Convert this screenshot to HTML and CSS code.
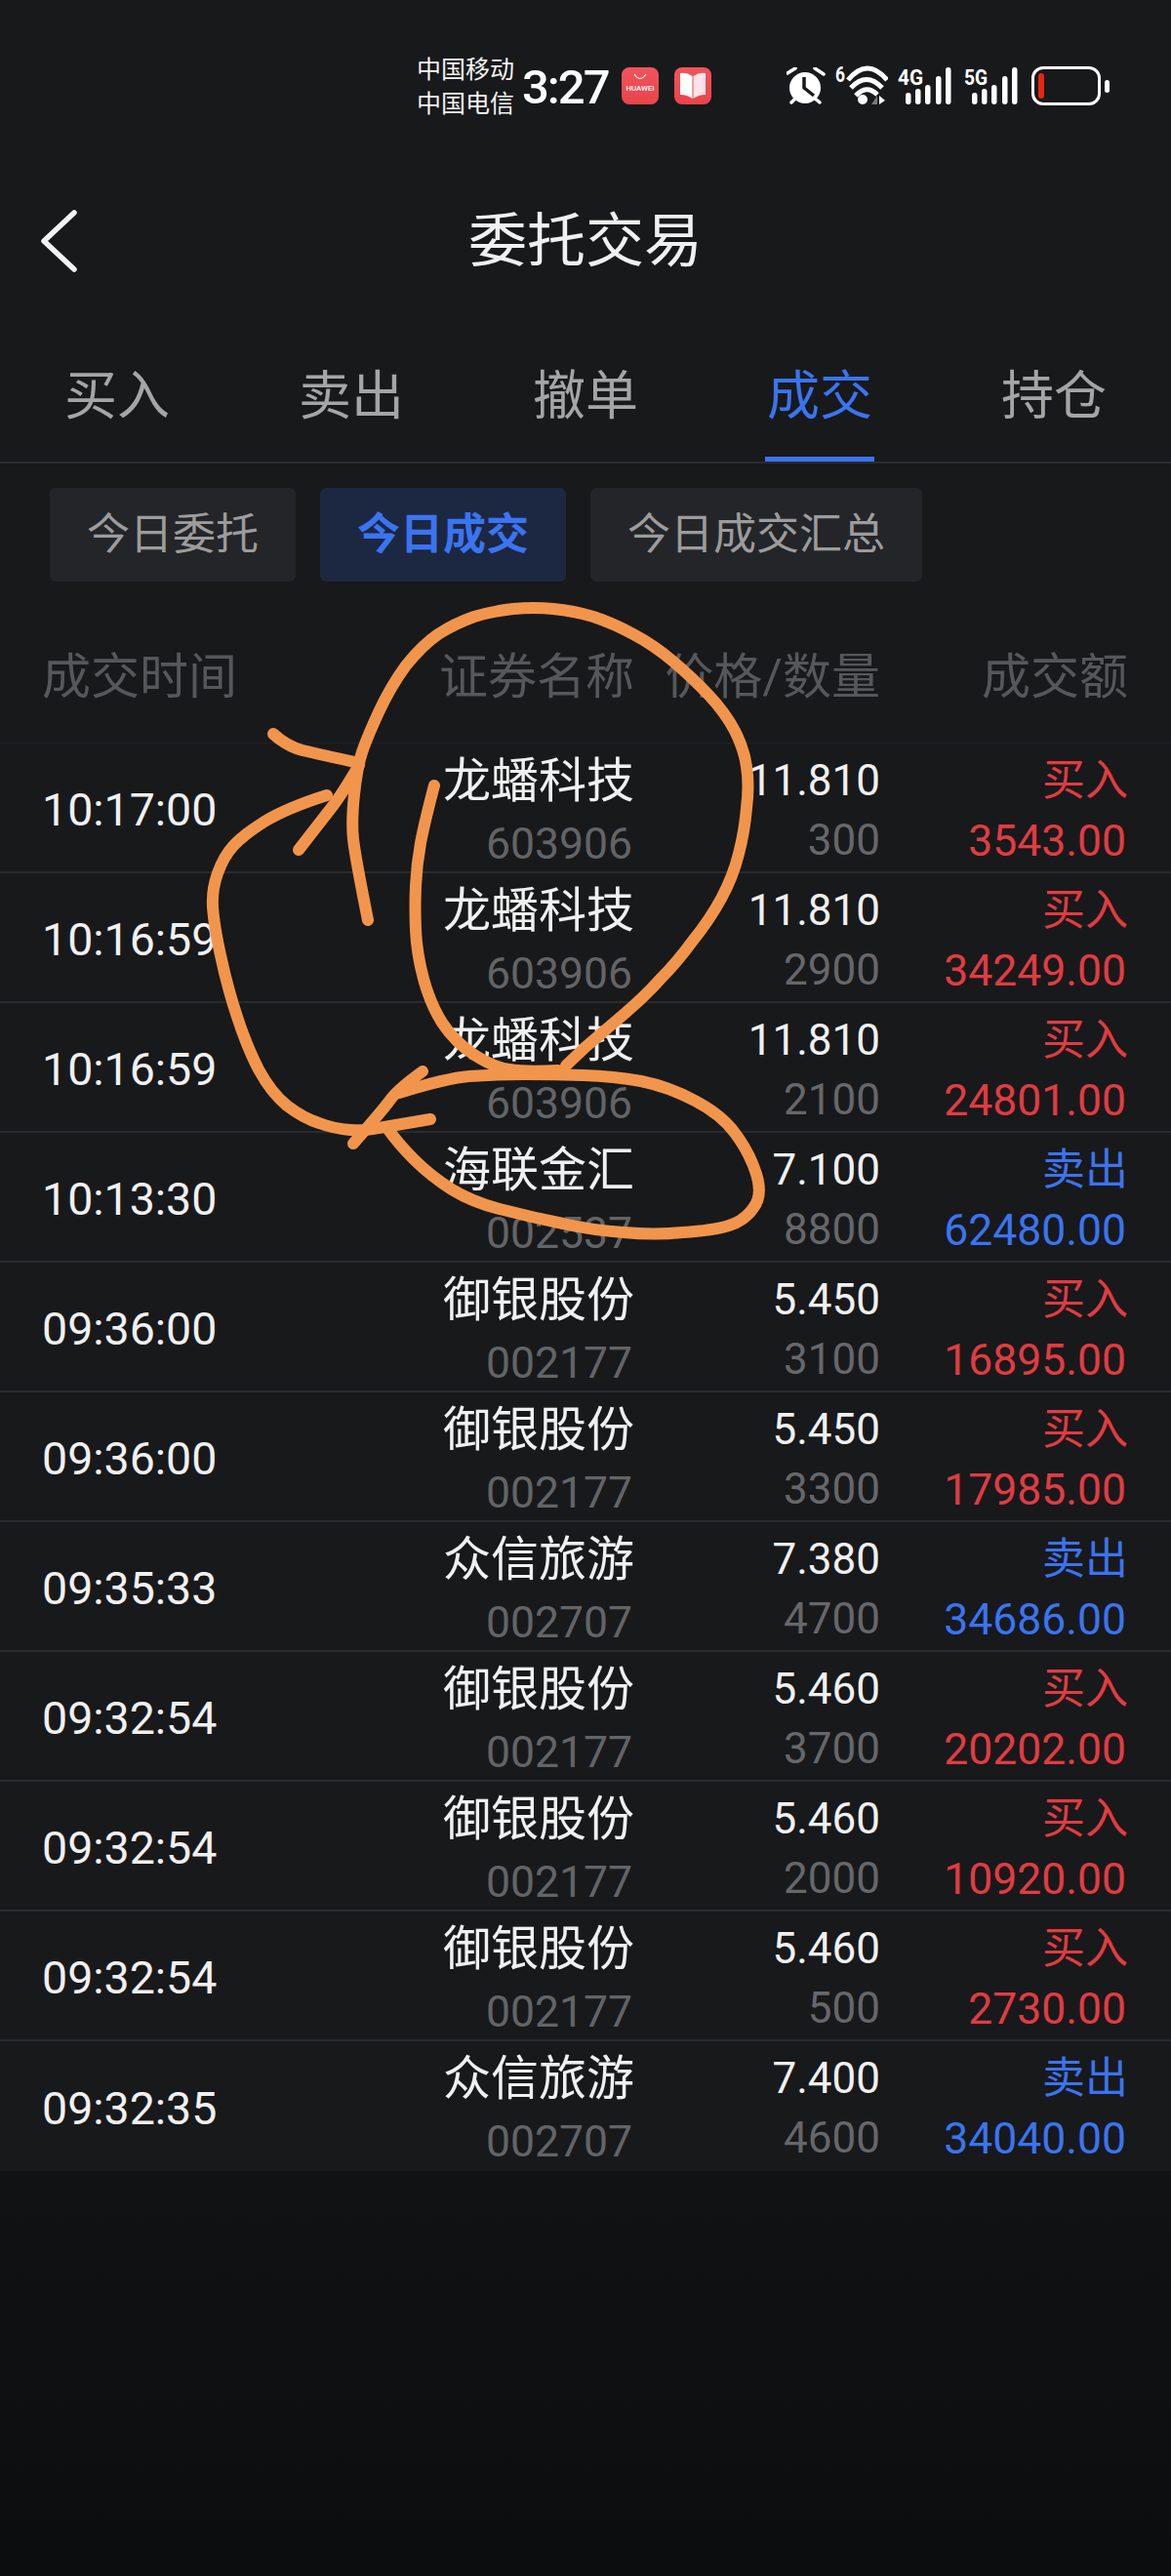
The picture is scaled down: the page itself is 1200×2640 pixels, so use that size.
FILE: index.html
```html
<!DOCTYPE html>
<html lang="zh-CN">
<head>
    <meta charset="UTF-8">
    <title>委托交易</title>
    <link rel="stylesheet" href="styles.css">
</head>
<body>
    <div class="screen">
        <div class="status-bar">
            <div class="carriers">
                <span>中国移动</span>
                <span>中国电信</span>
            </div>
            <div class="clock">3:27</div>
            <div class="app-icon">
                <svg viewBox="0 0 38 38" width="38" height="38">
                    <defs>
                        <linearGradient id="appRed" x1="0" y1="0" x2="0" y2="1">
                            <stop offset="0" stop-color="#f1545c"/>
                            <stop offset="1" stop-color="#e8444c"/>
                        </linearGradient>
                    </defs>
                    <rect width="38" height="38" rx="8" fill="url(#appRed)"/>
                    <path d="M13 7q6 9 12 0" fill="none" stroke="#fff" stroke-width="1.200"/>
                    <text x="19" y="23.500" class="huawei-text" text-anchor="middle" textLength="29" lengthAdjust="spacingAndGlyphs">HUAWEI</text>
                </svg>
            </div>
            <div class="app-icon book-icon">
                <svg viewBox="0 0 38 38" width="38" height="38">
                    <rect width="38" height="38" rx="8" fill="url(#appRed)"/>
                    <path d="M18.500 9Q13 5 6 6V28Q13 28 18.500 32Z" fill="#fff"/>
                    <path d="M19.500 9Q25 5 32 6V28Q25 28 19.500 32Z" fill="#fde3e8"/>
                </svg>
            </div>
            <div class="alarm-icon">
                <svg viewBox="0 0 40 38" width="40" height="38">
                    <circle cx="19" cy="21" r="16" fill="#fff"/>
                    <path d="M1 6L9 1M29 1L38 7M5 36L10 31M28 31L34 36" fill="none" stroke="#fff" stroke-width="3.500" stroke-linecap="round"/>
                    <path d="M18 10V21L28 29" fill="none" stroke="#18191b" stroke-width="3.500"/>
                </svg>
            </div>
            <div class="wifi-icon">
                <svg viewBox="0 0 54 42" width="54" height="42">
                    <text x="0" y="17" class="net-text" textLength="10" lengthAdjust="spacingAndGlyphs">6</text>
                    <path d="M13 15Q33 -9 53 15" fill="none" stroke="#fff" stroke-width="5"/>
                    <path d="M16 23Q32 6 48 23" fill="none" stroke="#fff" stroke-width="5"/>
                    <path d="M21 31Q32 19 43 30" fill="none" stroke="#fff" stroke-width="5"/>
                    <circle cx="28" cy="35" r="5" fill="#fff"/>
                    <path d="M43 31V40H37Z" fill="#777"/>
                    <path d="M45 31L51 36L45 40Z" fill="#fff"/>
                </svg>
            </div>
            <div class="signal-icon">
                <svg viewBox="0 0 55 42" width="55" height="42">
                    <text x="0" y="20" class="net-text" textLength="26" lengthAdjust="spacingAndGlyphs">4G</text>
                    <rect x="8" y="28" width="5.500" height="12" rx="2.700" fill="#fff"/>
                    <rect x="18" y="24" width="5.500" height="16" rx="2.700" fill="#fff"/>
                    <rect x="28" y="20" width="5.500" height="20" rx="2.700" fill="#fff"/>
                    <rect x="39" y="11" width="5.500" height="29" rx="2.700" fill="#fff"/>
                    <rect x="49" y="2" width="5.500" height="38" rx="2.700" fill="#fff"/>
                </svg>
            </div>
            <div class="signal-icon signal-second">
                <svg viewBox="0 0 55 42" width="55" height="42">
                    <text x="0" y="20" class="net-text" textLength="24" lengthAdjust="spacingAndGlyphs">5G</text>
                    <rect x="8" y="28" width="5.500" height="12" rx="2.700" fill="#fff"/>
                    <rect x="18" y="24" width="5.500" height="16" rx="2.700" fill="#fff"/>
                    <rect x="28" y="20" width="5.500" height="20" rx="2.700" fill="#fff"/>
                    <rect x="39" y="11" width="5.500" height="29" rx="2.700" fill="#fff"/>
                    <rect x="49" y="2" width="5.500" height="38" rx="2.700" fill="#fff"/>
                </svg>
            </div>
            <div class="battery">
                <div class="battery-level"></div>
            </div>
            <div class="battery-nub"></div>
        </div>

        <div class="nav-bar">
            <svg class="back-icon" viewBox="0 0 40 66" width="40" height="66">
                <path d="M36 4L5 33L36 62" fill="none" stroke="#f2f2f2" stroke-width="5.500" stroke-linecap="round" stroke-linejoin="round"/>
            </svg>
            <h1>委托交易</h1>
        </div>

        <div class="tabs">
            <div class="tab"><span>买入</span></div>
            <div class="tab"><span>卖出</span></div>
            <div class="tab"><span>撤单</span></div>
            <div class="tab active"><span>成交</span></div>
            <div class="tab"><span>持仓</span></div>
        </div>

        <div class="chips">
            <div class="chip">今日委托</div>
            <div class="chip active">今日成交</div>
            <div class="chip">今日成交汇总</div>
        </div>

        <div class="table-head">
            <div>成交时间</div>
            <div class="right">证券名称</div>
            <div class="right">价格/数量</div>
            <div class="right">成交额</div>
        </div>

        <div class="row">
            <div class="time">10:17:00</div>
            <div class="cell"><span class="name">龙蟠科技</span><span class="code">603906</span></div>
            <div class="cell"><span class="price">11.810</span><span class="qty">300</span></div>
            <div class="cell buy"><span class="side">买入</span><span class="amount">3543.00</span></div>
        </div>
        <div class="row">
            <div class="time">10:16:59</div>
            <div class="cell"><span class="name">龙蟠科技</span><span class="code">603906</span></div>
            <div class="cell"><span class="price">11.810</span><span class="qty">2900</span></div>
            <div class="cell buy"><span class="side">买入</span><span class="amount">34249.00</span></div>
        </div>
        <div class="row">
            <div class="time">10:16:59</div>
            <div class="cell"><span class="name">龙蟠科技</span><span class="code">603906</span></div>
            <div class="cell"><span class="price">11.810</span><span class="qty">2100</span></div>
            <div class="cell buy"><span class="side">买入</span><span class="amount">24801.00</span></div>
        </div>
        <div class="row">
            <div class="time">10:13:30</div>
            <div class="cell"><span class="name">海联金汇</span><span class="code">002537</span></div>
            <div class="cell"><span class="price">7.100</span><span class="qty">8800</span></div>
            <div class="cell sell"><span class="side">卖出</span><span class="amount">62480.00</span></div>
        </div>
        <div class="row">
            <div class="time">09:36:00</div>
            <div class="cell"><span class="name">御银股份</span><span class="code">002177</span></div>
            <div class="cell"><span class="price">5.450</span><span class="qty">3100</span></div>
            <div class="cell buy"><span class="side">买入</span><span class="amount">16895.00</span></div>
        </div>
        <div class="row">
            <div class="time">09:36:00</div>
            <div class="cell"><span class="name">御银股份</span><span class="code">002177</span></div>
            <div class="cell"><span class="price">5.450</span><span class="qty">3300</span></div>
            <div class="cell buy"><span class="side">买入</span><span class="amount">17985.00</span></div>
        </div>
        <div class="row">
            <div class="time">09:35:33</div>
            <div class="cell"><span class="name">众信旅游</span><span class="code">002707</span></div>
            <div class="cell"><span class="price">7.380</span><span class="qty">4700</span></div>
            <div class="cell sell"><span class="side">卖出</span><span class="amount">34686.00</span></div>
        </div>
        <div class="row">
            <div class="time">09:32:54</div>
            <div class="cell"><span class="name">御银股份</span><span class="code">002177</span></div>
            <div class="cell"><span class="price">5.460</span><span class="qty">3700</span></div>
            <div class="cell buy"><span class="side">买入</span><span class="amount">20202.00</span></div>
        </div>
        <div class="row">
            <div class="time">09:32:54</div>
            <div class="cell"><span class="name">御银股份</span><span class="code">002177</span></div>
            <div class="cell"><span class="price">5.460</span><span class="qty">2000</span></div>
            <div class="cell buy"><span class="side">买入</span><span class="amount">10920.00</span></div>
        </div>
        <div class="row">
            <div class="time">09:32:54</div>
            <div class="cell"><span class="name">御银股份</span><span class="code">002177</span></div>
            <div class="cell"><span class="price">5.460</span><span class="qty">500</span></div>
            <div class="cell buy"><span class="side">买入</span><span class="amount">2730.00</span></div>
        </div>
        <div class="row last">
            <div class="time">09:32:35</div>
            <div class="cell"><span class="name">众信旅游</span><span class="code">002707</span></div>
            <div class="cell"><span class="price">7.400</span><span class="qty">4600</span></div>
            <div class="cell sell"><span class="side">卖出</span><span class="amount">34040.00</span></div>
        </div>

        <!-- hand drawn marks on top of the screenshot -->
        <svg class="scribble" viewBox="0 0 1200 2640" width="1200" height="2640">
            <path d="M377 943 Q364 878 362 860 Q360 843 363 814 Q366 786 371 771 Q376 756 388 730 Q400 704 416 682 Q433 661 449 650 Q466 639 486 632 Q506 626 526 624 Q547 622 567 624 Q588 626 608 632 Q629 639 649 650 Q670 661 690 678 Q710 695 726 712 Q743 730 753 749 Q763 769 765 786 Q768 804 765 828 Q763 852 757 875 Q751 899 739 921 Q727 943 710 964 Q694 986 677 1003 Q661 1021 641 1038 Q621 1055 600 1073 L580 1092"/>
            <path d="M445 805 Q435 843 431 864 Q427 886 426 908 Q425 930 426 953 Q427 977 434 1003 Q441 1029 453 1048 Q466 1068 486 1081 Q506 1094 522 1096 Q539 1099 572 1097"/>
            <path d="M409 1120 Q457 1105 481 1103 Q506 1101 537 1101 Q568 1101 598 1102 Q629 1103 657 1108 Q686 1114 712 1128 Q739 1142 753 1161 Q768 1181 775 1203 Q782 1225 772 1238 Q763 1251 747 1256 Q731 1261 700 1263 Q670 1266 639 1263 Q608 1261 577 1254 Q547 1248 516 1240 Q486 1233 463 1219 Q441 1205 424 1188 Q408 1172 396 1155"/>
            <path d="M433 1098 Q408 1116 400 1127 Q392 1138 362 1172"/>
            <path d="M441 1147 Q400 1154 388 1156 Q376 1159 359 1158 Q343 1157 327 1151 Q311 1146 294 1133 Q278 1120 265 1096 Q253 1073 243 1042 Q233 1012 226 979 Q219 947 218 929 Q217 912 223 895 Q229 878 239 867 Q249 856 271 842 Q294 828 335 815"/>
            <path d="M280 752 Q294 765 310 769 Q327 773 368 782"/>
            <path d="M306 871 Q331 839 341 826 Q351 813 368 784"/>
        </svg>
    </div>
</body>
</html>
```

FILE: styles.css
```css
/* General page styling */
body {
    margin: 0;
    background: linear-gradient(#111214 2225px, #0c0d0f);
    font-family: Roboto, "Noto Sans CJK SC", sans-serif;
    color: #f0f0f0;
}

.screen {
    position: relative;
    width: 1200px;
    height: 2640px;
    overflow: hidden;
}

/* Status bar */
.status-bar {
    display: flex;
    align-items: flex-start;
    box-sizing: border-box;
    height: 170px;
    padding: 54px 0 0 427px;
    background-color: #18191b;
}

.carriers {
    display: flex;
    flex-direction: column;
    font-size: 25px;
    line-height: 35px;
    color: #f4f4f4;
}

.clock {
    margin: 12px 0 0 8px;
    font-size: 49px;
    font-weight: 500;
    letter-spacing: -2px;
    line-height: 48px;
    color: #fff;
}

.app-icon {
    height: 38px;
    margin: 15px 0 0 14px;
}

.book-icon {
    margin-left: 16px;
}

.huawei-text {
    font-size: 8px;
    font-weight: 500;
    fill: #fff;
}

.net-text {
    font-size: 22px;
    font-weight: 700;
    fill: #fff;
}

.alarm-icon {
    height: 38px;
    margin: 15px 0 0 77px;
}

.wifi-icon {
    height: 42px;
    margin: 13px 0 0 10px;
}

.signal-icon {
    height: 42px;
    margin: 13px 0 0 10px;
}

.signal-second {
    margin-left: 13px;
}

.battery {
    box-sizing: border-box;
    width: 71px;
    height: 40px;
    margin: 14px 0 0 14px;
    padding: 4px;
    border: 3px solid #fff;
    border-radius: 12px;
}

.battery-level {
    width: 6px;
    height: 100%;
    border-radius: 3px;
    background-color: #e5260f;
}

.battery-nub {
    width: 5px;
    height: 13px;
    margin: 28px 0 0 4px;
    border-radius: 3px;
    background-color: #fff;
}

/* Title bar */
.nav-bar {
    position: relative;
    height: 150px;
    background-color: #18191b;
}

.back-icon {
    position: absolute;
    left: 40px;
    top: 44px;
}

h1 {
    margin: 0;
    padding-top: 6px;
    font-size: 60px;
    font-weight: 400;
    line-height: 144px;
    text-align: center;
}

/* Tabs */
.tabs {
    display: grid;
    grid-template-columns: repeat(5, 1fr);
    padding-top: 48px;
    background-color: #18191b;
    border-bottom: 2px solid #2a2b2e;
    font-size: 54px;
    line-height: 78px;
    color: #a5a5a5;
    text-align: center;
}

.tab span {
    display: inline-block;
    padding: 0 2px 22px;
    border-bottom: 5px solid transparent;
}

.tab.active {
    color: #3b74f0;
}

.tab.active span {
    border-bottom-color: #3b74f0;
}

/* Filter chips */
.chips {
    display: flex;
    gap: 25px;
    padding: 25px 0 0 51px;
    background-color: #18191b;
}

.chip {
    padding: 0 38px;
    height: 96px;
    border-radius: 6px;
    background-color: #242528;
    font-size: 44px;
    line-height: 96px;
    color: #9c9c9c;
}

.chip.active {
    background-color: #1c2742;
    color: #3b74f0;
    font-weight: 700;
}

/* Table */
.table-head,
.row {
    display: grid;
    grid-template-columns: 221px 386px 252px 254px;
    box-sizing: border-box;
    padding: 0 44px 0 43px;
    background-color: #18191b;
}

.table-head {
    height: 166px;
    padding-top: 68px;
    border-bottom: 1px solid #222326;
    font-size: 50px;
    line-height: 60px;
    color: #55575a;
}

.right {
    text-align: right;
    white-space: nowrap;
}

.row {
    height: 133px;
    border-bottom: 2px solid #2a2b2e;
}

.row.last {
    border-bottom: none;
}

.time {
    align-self: center;
    margin-top: 4px;
    font-size: 46.500px;
    white-space: nowrap;
}

.cell {
    display: flex;
    flex-direction: column;
    align-items: flex-end;
}

.name {
    font-size: 49px;
    line-height: 78px;
}

.code {
    margin-right: 2px;
    font-size: 44.500px;
    line-height: 51px;
    color: #626466;
}

.price,
.side {
    font-size: 44px;
    line-height: 76px;
}

.qty {
    font-size: 44px;
    line-height: 46px;
    color: #666769;
}

.amount {
    margin-right: 2px;
    font-size: 44.500px;
    line-height: 48px;
}

.buy {
    color: #e03c42;
}

.sell {
    color: #3b74f0;
}

/* Orange pen marks over the table */
.scribble {
    position: absolute;
    left: 0;
    top: 0;
    fill: none;
    stroke: #f2954c;
    stroke-width: 12;
    stroke-linecap: round;
    stroke-linejoin: round;
}
```
